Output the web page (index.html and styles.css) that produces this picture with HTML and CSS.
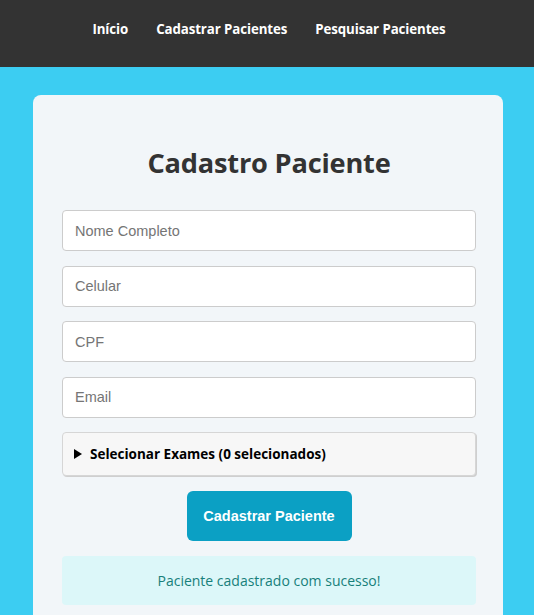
FILE: index.html
```html
<!DOCTYPE html>
<html lang="pt-BR">
<head>
<meta charset="utf-8">
<title>Cadastro Paciente</title>
<link rel="stylesheet" href="styles.css">
</head>
<body>
<header class="topbar">
  <nav class="nav">
    <a href="#" class="nav-link">Início</a>
    <a href="#" class="nav-link">Cadastrar Pacientes</a>
    <a href="#" class="nav-link">Pesquisar Pacientes</a>
  </nav>
</header>
<main class="page">
  <section class="card">
    <h1 class="title">Cadastro Paciente</h1>
    <form class="form">
      <input class="field" type="text" placeholder="Nome Completo">
      <input class="field" type="text" placeholder="Celular">
      <input class="field" type="text" placeholder="CPF">
      <input class="field" type="email" placeholder="Email">
      <details class="exams">
        <summary class="exams-summary">Selecionar Exames (0 selecionados)</summary>
      </details>
      <button type="button" class="submit">Cadastrar Paciente</button>
    </form>
    <div class="message">Paciente cadastrado com sucesso!</div>
  </section>
</main>
</body>
</html>
```
FILE: styles.css
```css
* { box-sizing: border-box; }
html, body { margin: 0; padding: 0; }
body {
  background: #3ccdf2;
  font-family: "Open Sans", "Noto Sans", sans-serif;
  color: #333;
  min-height: 615px;
}
.topbar {
  background: #333333;
  height: 67px;
  display: flex;
  align-items: center;
  justify-content: center;
  padding-bottom: 10px;
}
.nav {
  display: flex;
  gap: 28px;
  padding-left: 4px;
}
.nav-link {
  color: #fff;
  text-decoration: none;
  font-weight: 700;
  font-size: 13.3px;
  letter-spacing: -0.1px;
}
.page {
  padding: 28px 31px 0 33px;
}
.card {
  background: #f2f6f9;
  border-radius: 8px;
  width: 470px;
  padding: 44px 27px 20px 29px;
}
.title {
  margin: 0 0 23px;
  text-align: center;
  font-size: 27.2px;
  font-weight: 700;
  color: #333;
  letter-spacing: -0.2px;
  line-height: 48px;
}
.form {
  display: flex;
  flex-direction: column;
  gap: 14.6px;
}
.field {
  height: 41px;
  width: 100%;
  border: 1px solid #ccc;
  border-radius: 4px;
  background: #fff;
  padding: 0 12px;
  font-family: "Liberation Sans", Arial, sans-serif;
  font-size: 14.5px;
  color: #333;
}
.field::placeholder { color: #757575; }
.exams {
  background: #f7f7f7;
  border: 1px solid #d6d6d6;
  border-radius: 4px;
  box-shadow: 1px 1px 0 #cfcfcf;
  height: 44px;
}
.exams-summary {
  height: 42px;
  display: flex;
  align-items: center;
  padding-left: 11px;
  font-weight: 700;
  font-size: 13.5px;
  color: #000;
  list-style: none;
  cursor: pointer;
}
.exams-summary::-webkit-details-marker { display: none; }
.exams-summary::before {
  content: "";
  width: 0;
  height: 0;
  border-left: 8px solid #000;
  border-top: 5px solid transparent;
  border-bottom: 5px solid transparent;
  margin-right: 8px;
}
.submit {
  align-self: center;
  width: 165px;
  height: 50px;
  background: #0ba0c4;
  color: #fff;
  border: none;
  border-radius: 6px;
  font-family: "Liberation Sans", Arial, sans-serif;
  font-weight: 700;
  font-size: 14.5px;
  margin-top: 0;
}
.message {
  margin-top: 15px;
  height: 49px;
  background: #dcf7f9;
  border-radius: 4px;
  display: flex;
  align-items: center;
  justify-content: center;
  color: #17807b;
  font-size: 14px;
}
```
